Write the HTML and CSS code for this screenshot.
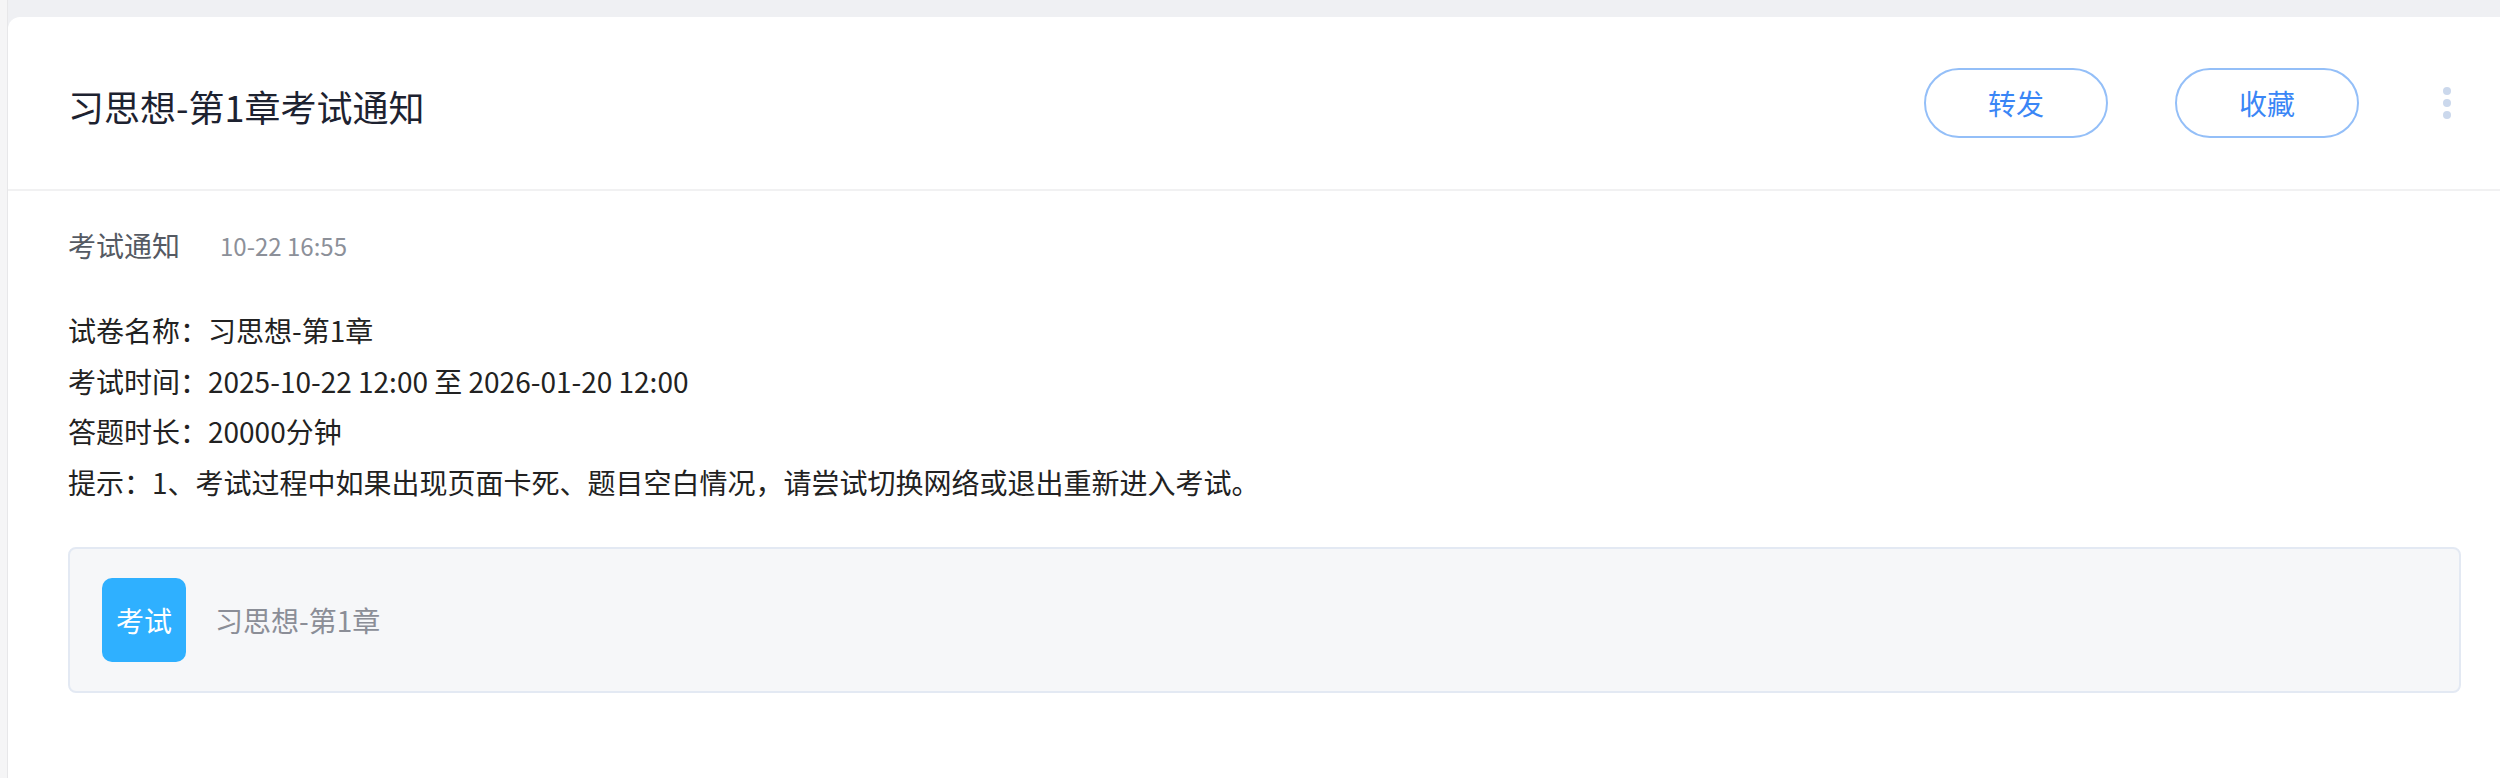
FILE: index.html
```html
<!DOCTYPE html>
<html lang="zh-CN">
<head>
<meta charset="utf-8">
<title>习思想-第1章考试通知</title>
<link rel="stylesheet" href="styles.css">
</head>
<body>
<div class="page">
  <div class="edge"></div>
  <div class="main">
    <div class="card">
      <div class="header">
        <h1 class="title">习思想-第1章考试通知</h1>
        <div class="actions">
          <button class="btn">转发</button>
          <button class="btn">收藏</button>
          <div class="more"><span></span><span></span><span></span></div>
        </div>
      </div>
      <div class="content">
        <div class="meta">
          <span class="meta-type">考试通知</span>
          <span class="meta-time">10-22 16:55</span>
        </div>
        <div class="body">
          <p>试卷名称：习思想-第1章</p>
          <p>考试时间：2025-10-22 12:00 至 2026-01-20 12:00</p>
          <p>答题时长：20000分钟</p>
          <p>提示：1、考试过程中如果出现页面卡死、题目空白情况，请尝试切换网络或退出重新进入考试。</p>
        </div>
        <div class="attach">
          <div class="badge">考试</div>
          <div class="attach-name">习思想-第1章</div>
        </div>
      </div>
    </div>
  </div>
</div>
</body>
</html>
```

FILE: styles.css
```css
* { box-sizing: border-box; }
html, body { margin: 0; padding: 0; height: 100%; }
body {
  font-family: "Noto Sans CJK SC", "Noto Sans", sans-serif;
  background: #eff0f3;
  overflow: hidden;
}
.page { display: flex; min-height: 100%; }
.edge {
  width: 8px;
  flex: none;
  background: #f5f5f6;
  border-right: 1px solid #e7e7e9;
}
.main { flex: 1; padding-top: 17px; display: flex; flex-direction: column; }
.card {
  flex: 1;
  background: #fff;
  border-top-left-radius: 12px;
}
.header {
  height: 174px;
  display: flex;
  align-items: center;
  justify-content: space-between;
  padding: 0 49px 0 60px;
  border-bottom: 2px solid #f1f1f2;
}
.title {
  margin: 0;
  padding-top: 6px;
  font-size: 36px;
  font-weight: 400;
  color: #1d2230;
  line-height: 1;
}
.actions { display: flex; align-items: center; }
.btn {
  width: 184px;
  height: 70px;
  margin-left: 67px;
  border: 2px solid #94bff8;
  border-radius: 35px;
  background: #fff;
  color: #3a86f6;
  font-family: inherit;
  font-size: 28px;
  line-height: 1;
  padding: 0;
}
.more {
  margin-left: 84px;
  width: 8px;
  display: flex;
  flex-direction: column;
  gap: 4px;
}
.more span {
  width: 8px; height: 8px;
  border-radius: 50%;
  background: #cbd8ec;
}
.content { padding: 34px 39px 0 60px; }
.meta { display: flex; align-items: center; height: 40px; }
.meta-type { font-size: 28px; color: #555a63; }
.meta-time { margin-left: 40px; font-size: 24px; color: #8c9099; }
.body { margin-top: 40px; }
.body p {
  margin: 0;
  font-size: 28px;
  line-height: 50.5px;
  color: #222;
}
.attach {
  margin-top: 40px;
  display: flex;
  align-items: center;
  padding: 29px 32px;
  border: 2px solid #e3e9f3;
  border-radius: 8px;
  background: #f6f7f9;
}
.badge {
  width: 84px; height: 84px;
  border-radius: 10px;
  background: #2fb0ff;
  color: #fff;
  font-size: 28px;
  display: flex; align-items: center; justify-content: center;
}
.attach-name { margin-left: 29px; font-size: 28px; color: #8b8e97; }
```
